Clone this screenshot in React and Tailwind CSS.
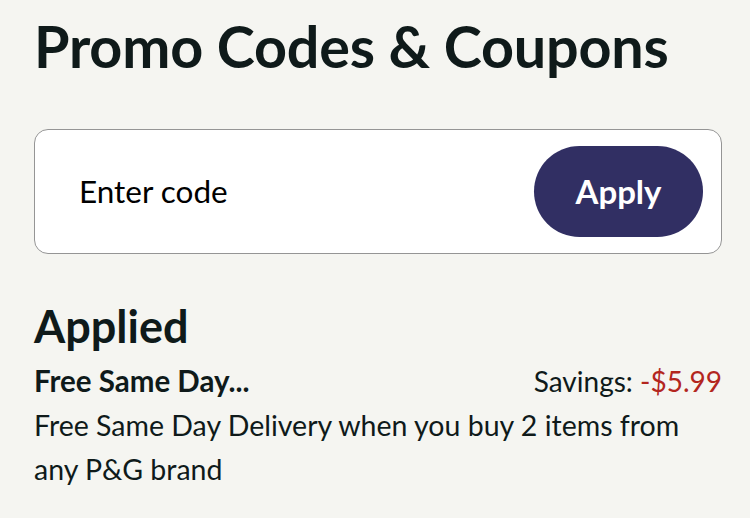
import React, { useState } from 'react'

export default function App() {
  const [code, setCode] = useState('')

  return (
    <div className="min-h-screen w-full bg-[#f5f5f1] pl-[34px] pr-[28px] pt-[17px] text-[#0f1a1a]" style={{ fontFamily: 'Lato, "Noto Sans", sans-serif' }}>
      <h1 className="text-[57.5px] font-bold leading-[57px] tracking-[-0.2px]">Promo Codes &amp; Coupons</h1>

      <div className="mt-[55px] flex h-[125px] items-center rounded-[14px] border border-[#959595] bg-white pl-[44px] pr-[18px]">
        <input
          type="text"
          value={code}
          onChange={(e) => setCode(e.target.value)}
          placeholder="Enter code"
          className="min-w-0 flex-1 bg-transparent text-[31.5px] text-black placeholder:text-black focus:outline-none"
        />
        <button
          type="button"
          className="h-[91px] w-[169px] rounded-full bg-[#312f63] text-[33px] font-bold text-white"
        >
          Apply
        </button>
      </div>

      <h2 className="mt-[50px] text-[45px] font-bold leading-[44px]">Applied</h2>

      <div className="mt-[17px] flex items-baseline justify-between text-[28px] leading-[32px]">
        <span className="text-[29.5px] font-bold">Free Same Day...</span>
        <span>
          Savings: <span className="text-[#b3261e]">-$5.99</span>
        </span>
      </div>

      <p className="mt-[6px] text-[28.5px] leading-[44px]">
        Free Same Day Delivery when you buy 2 items from any P&amp;G brand
      </p>
    </div>
  )
}
